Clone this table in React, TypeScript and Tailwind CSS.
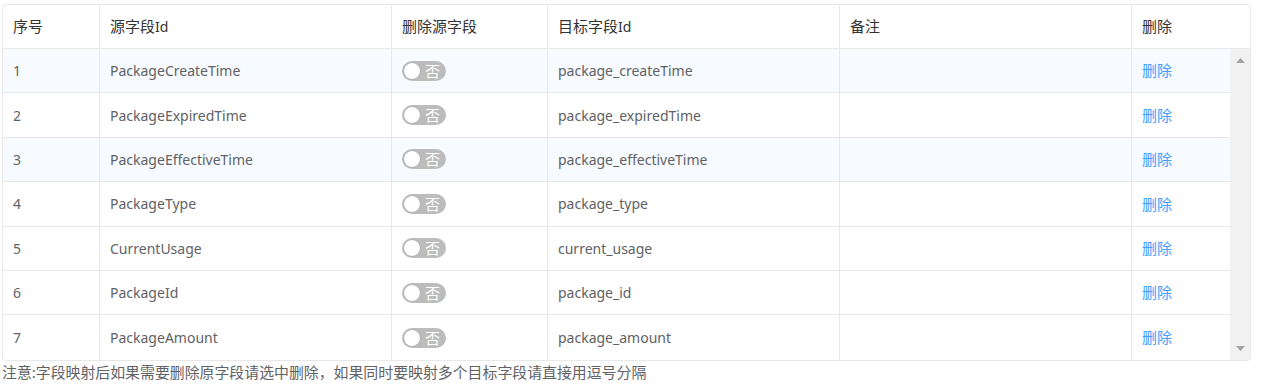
import React from "react";

const rows = [
  { id: 1, src: "PackageCreateTime", dst: "package_createTime", striped: true },
  { id: 2, src: "PackageExpiredTime", dst: "package_expiredTime", striped: false },
  { id: 3, src: "PackageEffectiveTime", dst: "package_effectiveTime", striped: true },
  { id: 4, src: "PackageType", dst: "package_type", striped: false },
  { id: 5, src: "CurrentUsage", dst: "current_usage", striped: false },
  { id: 6, src: "PackageId", dst: "package_id", striped: false },
  { id: 7, src: "PackageAmount", dst: "package_amount", striped: false },
];

function Switch() {
  return (
    <div className="relative flex h-[20px] w-[44px] items-center rounded-full bg-[#bcbcbc]">
      <span className="ml-[2px] h-[16px] w-[16px] rounded-full bg-white shadow-[0_0_1px_rgba(0,0,0,0.3)]" />
      <span className="ml-[5px] text-[15px] leading-[20px] text-white">否</span>
    </div>
  );
}

export default function App() {
  return (
    <div
      className="bg-white pl-[2px] pt-[4px] text-[14px] text-[#606266]"
      style={{ fontFamily: '"Noto Sans", "Noto Sans CJK SC", sans-serif' }}
    >
      <div className="w-[1249px] overflow-hidden rounded-[4px] border border-[#e8e8e8]">
        {/* header */}
        <div className="flex h-[44px] border-b border-[#e8e8e8] text-[15px] text-[#333333]">
          <div className="flex w-[97px] items-center border-r border-[#e8e8e8] pl-[10px]">序号</div>
          <div className="flex w-[292px] items-center border-r border-[#e8e8e8] pl-[10px]">
            源字段<span className="text-[14px]">Id</span>
          </div>
          <div className="flex w-[156px] items-center border-r border-[#e8e8e8] pl-[10px]">删除源字段</div>
          <div className="flex w-[292px] items-center border-r border-[#e8e8e8] pl-[10px]">
            目标字段<span className="text-[14px]">Id</span>
          </div>
          <div className="flex w-[292px] items-center border-r border-[#e8e8e8] pl-[10px]">备注</div>
          <div className="flex flex-1 items-center pl-[10px]">删除</div>
        </div>
        {/* body */}
        <div className="flex">
          <div className="flex w-[1227px] flex-col">
            {rows.map((r, i) => (
              <div
                key={r.id}
                className={`flex h-[44.4px] ${i < rows.length - 1 ? "border-b border-[#e8e8e8]" : ""} ${
                  r.striped ? "bg-[#f7fbff]" : "bg-white"
                }`}
              >
                <div className="flex w-[97px] items-center border-r border-[#e8e8e8] pl-[10px]">{r.id}</div>
                <div className="flex w-[292px] items-center border-r border-[#e8e8e8] pl-[10px]">{r.src}</div>
                <div className="flex w-[156px] items-center border-r border-[#e8e8e8] pl-[10px]">
                  <Switch />
                </div>
                <div className="flex w-[292px] items-center border-r border-[#e8e8e8] pl-[10px]">{r.dst}</div>
                <div className="flex w-[292px] items-center border-r border-[#e8e8e8] pl-[10px]" />
                <div className="flex w-[98px] items-center pl-[10px] text-[15px] text-[#409eff]">删除</div>
              </div>
            ))}
          </div>
          <div className="flex w-[20px] flex-col items-center justify-between bg-[#f1f1f1] pb-[9px] pt-[9px]">
            <svg width="9" height="5" viewBox="0 0 9 5">
              <polygon points="0,5 9,5 4.5,0" fill="#a3a3a3" />
            </svg>
            <svg width="9" height="5" viewBox="0 0 9 5">
              <polygon points="0,0 9,0 4.5,5" fill="#a3a3a3" />
            </svg>
          </div>
        </div>
      </div>
      <p className="text-[14.9px] leading-[22px] text-[#606266]">
        注意:字段映射后如果需要删除原字段请选中删除，如果同时要映射多个目标字段请直接用逗号分隔
      </p>
    </div>
  );
}
